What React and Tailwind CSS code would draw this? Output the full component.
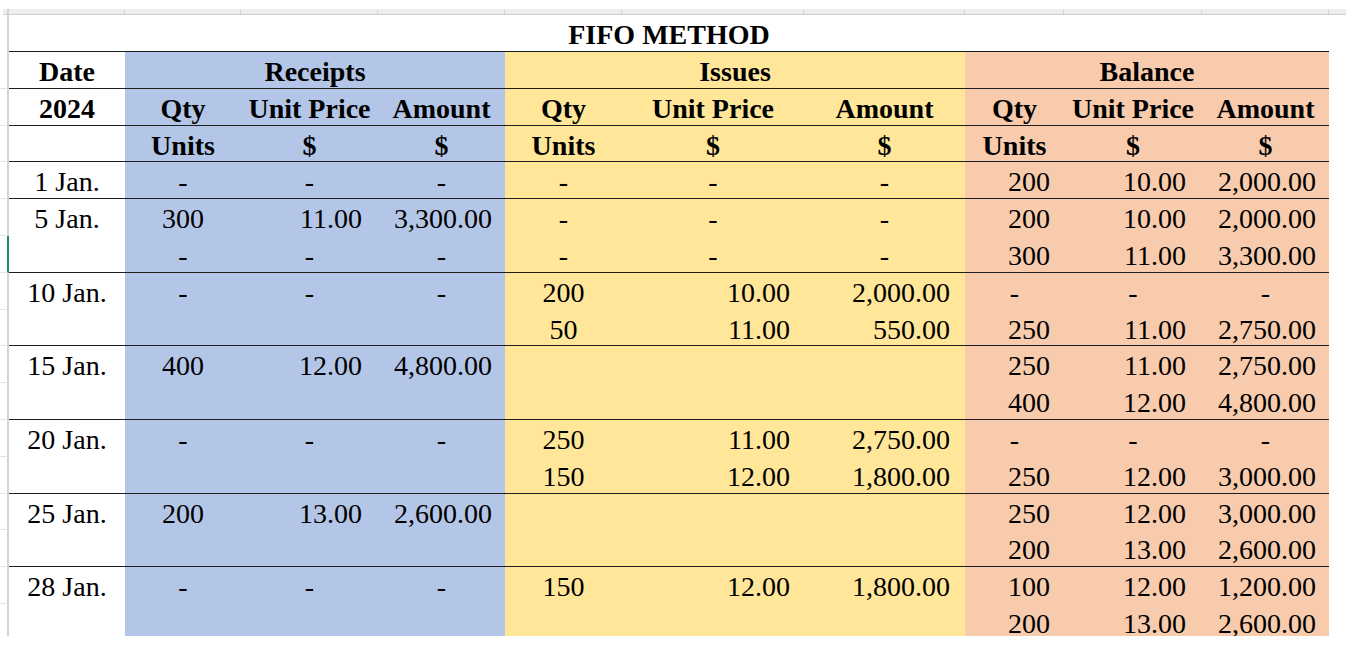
const COLS = [116, 116, 137, 127, 117, 182, 161, 99, 138, 127];

const BG = [
  'bg-white',
  'bg-[#b4c6e7]',
  'bg-[#b4c6e7]',
  'bg-[#b4c6e7]',
  'bg-[#ffe699]',
  'bg-[#ffe699]',
  'bg-[#ffe699]',
  'bg-[#f8cbad]',
  'bg-[#f8cbad]',
  'bg-[#f8cbad]',
];

// right padding for right-aligned number columns (null = centered)
const PAD = [null, null, 'pr-[16px]', 'pr-[13px]', null, 'pr-[14px]', 'pr-[15px]', 'pr-[14px]', 'pr-[16px]', 'pr-[13px]'];

const rows = [
  { date: '1 Jan.', v: ['-', '-', '-', '-', '-', '-', '200', '10.00', '2,000.00'], line: true },
  { date: '5 Jan.', v: ['300', '11.00', '3,300.00', '-', '-', '-', '200', '10.00', '2,000.00'] },
  { date: '', v: ['-', '-', '-', '-', '-', '-', '300', '11.00', '3,300.00'], line: true, selected: true },
  { date: '10 Jan.', v: ['-', '-', '-', '200', '10.00', '2,000.00', '-', '-', '-'] },
  { date: '', v: ['', '', '', '50', '11.00', '550.00', '250', '11.00', '2,750.00'], line: true },
  { date: '15 Jan.', v: ['400', '12.00', '4,800.00', '', '', '', '250', '11.00', '2,750.00'] },
  { date: '', v: ['', '', '', '', '', '', '400', '12.00', '4,800.00'], line: true },
  { date: '20 Jan.', v: ['-', '-', '-', '250', '11.00', '2,750.00', '-', '-', '-'] },
  { date: '', v: ['', '', '', '150', '12.00', '1,800.00', '250', '12.00', '3,000.00'], line: true },
  { date: '25 Jan.', v: ['200', '13.00', '2,600.00', '', '', '', '250', '12.00', '3,000.00'] },
  { date: '', v: ['', '', '', '', '', '', '200', '13.00', '2,600.00'], line: true },
  { date: '28 Jan.', v: ['-', '-', '-', '150', '12.00', '1,800.00', '100', '12.00', '1,200.00'] },
  { date: '', v: ['', '', '', '', '', '', '200', '13.00', '2,600.00'] },
];

function Cell({ col, children, span, bold, line, right }) {
  return (
    <div
      className={[
        BG[col],
        span ? 'col-span-3' : '',
        bold ? 'font-bold' : '',
        line ? 'border-b border-[#1e1e1e]' : '',
        right && children !== '-' ? 'text-right ' + PAD[col] : 'text-center',
        'pt-[4px] leading-[32.8px] whitespace-nowrap overflow-hidden',
      ].join(' ')}
    >
      {children}
    </div>
  );
}

function HeaderRows() {
  const sub = ['Qty', 'Unit Price', 'Amount'];
  const units = ['Units', '$', '$'];
  return (
    <>
      <Cell col={0} bold line>Date</Cell>
      <Cell col={1} bold line span>Receipts</Cell>
      <Cell col={4} bold line span>Issues</Cell>
      <Cell col={7} bold line span>Balance</Cell>

      <Cell col={0} bold line>2024</Cell>
      {[1, 2, 3, 4, 5, 6, 7, 8, 9].map((c) => (
        <Cell key={c} col={c} bold line>{sub[(c - 1) % 3]}</Cell>
      ))}

      <Cell col={0} bold line></Cell>
      {[1, 2, 3, 4, 5, 6, 7, 8, 9].map((c) => (
        <Cell key={c} col={c} bold line>{units[(c - 1) % 3]}</Cell>
      ))}
    </>
  );
}

export default function App() {
  const stripRows = [{}, {}, {}, {}, ...rows];
  return (
    <div className="w-[1346px] h-[650px] bg-white overflow-hidden text-[28px] text-black font-['Liberation_Serif','Times_New_Roman',serif]">
      <div className="pt-[9px]">
        {/* excel column header strip */}
        <div className="ml-[3px] flex h-[6px] bg-[#ededed] border-b border-[#cfcfcf]">
          <div className="w-[6px] border-r-2 border-[#d4d4d4]" />
          {COLS.map((w, i) => (
            <div key={i} style={{ width: w }} className="border-r border-[#d8d8d8]" />
          ))}
        </div>

        <div className="flex h-[621px] overflow-hidden">
          {/* row header strip */}
          <div className="w-[9px] shrink-0 flex flex-col">
            <div className="h-[37px] shrink-0 border-r-2 border-[#d4d4d4]" />
            {stripRows.slice(1).map((r, i) => (
              <div
                key={i}
                className={
                  'h-[36.8px] shrink-0 border-b border-b-[#e4e4e4] border-r-2 ' +
                  (r.selected ? 'border-r-[#1e8f5e]' : 'border-r-[#d4d4d4]')
                }
              />
            ))}
          </div>

          <div className="w-[1320px] shrink-0">
            <div className="h-[37px] border-b border-[#1e1e1e] text-center font-bold pt-[4px] leading-[32px]">
              FIFO METHOD
            </div>
            <div className="grid grid-cols-[116px_116px_137px_127px_117px_182px_161px_99px_138px_127px] auto-rows-[36.8px]">
              <HeaderRows />
              {rows.map((r, i) => (
                <div key={i} className="contents">
                  <Cell col={0} line={r.line}>{r.date}</Cell>
                  {r.v.map((val, j) => (
                    <Cell key={j} col={j + 1} line={r.line} right={j !== 0 && j !== 3}>
                      {val}
                    </Cell>
                  ))}
                </div>
              ))}
            </div>
          </div>
        </div>
      </div>
    </div>
  );
}
